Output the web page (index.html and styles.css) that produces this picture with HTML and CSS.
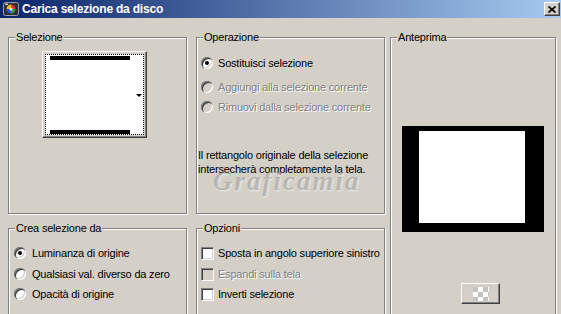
FILE: index.html
```html
<!DOCTYPE html>
<html lang="it">
<head>
<meta charset="utf-8">
<title>Carica selezione da disco</title>
<link rel="stylesheet" href="styles.css">
</head>
<body>
<div class="window">
  <div class="titlebar">
    <svg class="app-icon" width="16" height="16" viewBox="0 0 16 16">
      <rect x="0.5" y="1.5" width="15" height="13" rx="2" fill="#2e2e34" stroke="#9aa0b0"/>
      <path d="M8 8 L8 3.5 A4.5 4.5 0 0 1 12.5 8 Z" fill="#e03030"/>
      <path d="M8 8 L12.5 8 A4.5 4.5 0 0 1 8 12.5 Z" fill="#30a040"/>
      <path d="M8 8 L8 12.5 A4.5 4.5 0 0 1 3.5 8 Z" fill="#3050e0"/>
      <path d="M8 8 L3.5 8 A4.5 4.5 0 0 1 8 3.5 Z" fill="#e0c020"/>
      <circle cx="8" cy="8" r="1.5" fill="#fff"/>
      <rect x="2" y="2.5" width="3" height="1.5" fill="#d0d0d0"/>
    </svg>
    <span class="title">Carica selezione da disco</span>
    <button class="close" type="button" aria-label="Chiudi">
      <svg width="8" height="7" viewBox="0 0 8 7"><path d="M0.5 0.5 L7.5 6.5 M7.5 0.5 L0.5 6.5" stroke="#000" stroke-width="1.7"/></svg>
    </button>
  </div>

  <div class="content">
    <div class="col col-left">
      <div class="group group-top">
        <span class="legend">Selezione</span>
        <div class="picker">
          <div class="picker-face">
            <div class="thumb"><span class="bar"></span><span class="bar"></span></div>
            <span class="arrow"></span>
          </div>
        </div>
      </div>
      <div class="group group-bottom">
        <span class="legend legend-crea">Crea selezione da</span>
        <div class="opt opt-first radio-pad-left"><span class="radio checked"></span><span>Luminanza di origine</span></div>
        <div class="opt opt-second radio-pad-left"><span class="radio"></span><span>Qualsiasi val. diverso da zero</span></div>
        <div class="opt opt-third radio-pad-left"><span class="radio"></span><span>Opacità di origine</span></div>
      </div>
    </div>

    <div class="col col-mid">
      <div class="group group-top group-op">
        <span class="legend">Operazione</span>
        <div class="opt op-1 radio-pad-mid"><span class="radio checked"></span><span>Sostituisci selezione</span></div>
        <div class="opt op-2 radio-pad-mid disabled"><span class="radio"></span><span>Aggiungi alla selezione corrente</span></div>
        <div class="opt op-3 radio-pad-mid disabled"><span class="radio"></span><span>Rimuovi dalla selezione corrente</span></div>
        <p class="message">Il rettangolo originale della selezione<br>intersecherà completamente la tela.</p>
        <span class="watermark">Graficamia</span>
      </div>
      <div class="group group-bottom">
        <span class="legend">Opzioni</span>
        <div class="opt opt-first check-pad"><span class="check"></span><span>Sposta in angolo superiore sinistro</span></div>
        <div class="opt opt-second check-pad disabled"><span class="check"></span><span>Espandi sulla tela</span></div>
        <div class="opt opt-third check-pad"><span class="check"></span><span>Inverti selezione</span></div>
      </div>
    </div>

    <div class="col col-right">
      <div class="group group-preview">
        <span class="legend">Anteprima</span>
        <div class="preview"><div class="preview-inner"></div></div>
        <button class="bg-button" type="button" aria-label="Sfondo"><span class="checker"></span></button>
      </div>
    </div>
  </div>
</div>
</body>
</html>
```

FILE: styles.css
```css
html, body {
  margin: 0;
  padding: 0;
  overflow: hidden;
}

body {
  width: 561px;
  height: 314px;
  background: #d4d0c8;
  font-family: "Liberation Sans", Arial, sans-serif;
  font-size: 11px;
  letter-spacing: -0.2px;
  color: #000;
}

.window {
  display: flex;
  flex-direction: column;
}

/* ---------- title bar ---------- */
.titlebar {
  display: flex;
  align-items: center;
  height: 18px;
  padding-left: 3px;
  background: linear-gradient(to right, #0a246a, #a6caf0);
}

.app-icon {
  flex: none;
}

.title {
  margin-left: 3px;
  color: #fff;
  font-weight: bold;
  font-size: 12px;
  letter-spacing: -0.2px;
}

.close {
  margin-left: auto;
  margin-right: 1px;
  width: 16px;
  height: 14px;
  padding: 0;
  box-sizing: border-box;
  background: #d4d0c8;
  border: 1px solid;
  border-color: #fff #404040 #404040 #fff;
  box-shadow: inset -1px -1px #808080;
  display: flex;
  align-items: center;
  justify-content: center;
}

/* ---------- layout ---------- */
.content {
  display: flex;
  padding: 19px 0 0 8px;
}

.col {
  display: flex;
  flex-direction: column;
}

.col-left { width: 179px; }
.col-mid { width: 189px; margin-left: 9px; }
.col-right { width: 166px; margin-left: 5px; }

/* ---------- group boxes ---------- */
.group {
  box-sizing: border-box;
  border: 1px solid #808080;
  box-shadow: inset 1px 1px #fff, 1px 1px #fff;
  display: flex;
  flex-direction: column;
  align-items: flex-start;
}

.group-top { height: 177px; }
.group-bottom { height: 110px; margin-top: 14px; }
.group-preview { height: 300px; }
.group-op { position: relative; }

.legend {
  margin: -7px 0 0 6px;
  padding: 0 1px;
  line-height: 13px;
  background: #d4d0c8;
}

/* ---------- selection picker ---------- */
.picker {
  margin: 7px 0 0 33px;
  width: 105px;
  height: 87px;
  box-sizing: border-box;
  padding: 2px;
  background: #d4d0c8;
  border: 1px solid;
  border-color: #fff #404040 #404040 #fff;
  box-shadow: inset -1px -1px #808080, inset 1px 1px #d4d0c8;
  display: flex;
}

.picker-face {
  flex: 1;
  background: #fff;
  border: 1px dotted #000;
  display: flex;
  align-items: center;
  padding: 1px 0 0 4px;
}

.thumb {
  align-self: stretch;
  width: 80px;
  display: flex;
  flex-direction: column;
  justify-content: space-between;
}

.bar {
  display: block;
  height: 4px;
  background: #000;
}

.arrow {
  margin-left: 6px;
  width: 0;
  height: 0;
  border-left: 3px solid transparent;
  border-right: 3px solid transparent;
  border-top: 3px solid #000;
}

/* ---------- radio / checkbox rows ---------- */
.opt {
  display: flex;
  align-items: center;
  height: 14px;
  white-space: nowrap;
}

.radio-pad-left { padding-left: 5px; gap: 6px; }
.radio-pad-mid { padding-left: 4px; gap: 5px; }
.check-pad { padding-left: 4px; gap: 4px; }

.opt-first { margin-top: 11px; }
.opt-second { margin-top: 7px; }
.opt-third { margin-top: 6px; }

.op-1 { margin-top: 12px; }
.op-2 { margin-top: 10px; }
.op-3 { margin-top: 6px; }

.radio {
  position: relative;
  flex: none;
  width: 12px;
  height: 12px;
  border-radius: 50%;
  background: #fff;
  box-shadow:
    inset 1px 1px #808080,
    inset 2px 2px #404040,
    inset -1px -1px #fff,
    inset -2px -2px #d4d0c8;
}

.radio.checked::after {
  content: "";
  position: absolute;
  left: 4px;
  top: 4px;
  width: 4px;
  height: 4px;
  border-radius: 50%;
  background: #000;
}

.check {
  flex: none;
  width: 13px;
  height: 13px;
  box-sizing: border-box;
  background: #fff;
  border: 1px solid;
  border-color: #808080 #fff #fff #808080;
  box-shadow: inset 1px 1px #404040, inset -1px -1px #d4d0c8;
}

.disabled {
  color: #808080;
  text-shadow: 1px 1px #fff;
}

.disabled .radio,
.disabled .check {
  background: #d4d0c8;
}

.message {
  margin: 34px 0 0 1px;
  line-height: 14px;
  white-space: nowrap;
}

.watermark {
  position: absolute;
  left: 16px;
  top: 136px;
  line-height: 14px;
  font-family: "Liberation Serif", serif;
  font-style: italic;
  font-weight: bold;
  font-size: 27px;
  letter-spacing: 2px;
  color: rgba(70, 70, 70, 0.28);
  text-shadow: 1px 1px 2px rgba(255, 255, 255, 0.6);
  pointer-events: none;
}

/* ---------- preview ---------- */
.preview {
  margin: 82px 0 0 11px;
  width: 142px;
  height: 106px;
  box-sizing: border-box;
  padding: 5px 19px 9px 17px;
  background: #000;
}

.preview-inner {
  height: 100%;
  background: #fff;
}

.bg-button {
  margin: 51px 0 0 70px;
  width: 39px;
  height: 21px;
  padding: 0;
  box-sizing: border-box;
  background: #d4d0c8;
  border: 1px solid;
  border-color: #fff #404040 #404040 #fff;
  box-shadow: inset -1px -1px #808080;
  display: flex;
  align-items: center;
  justify-content: center;
}

.checker {
  width: 16px;
  height: 14px;
  background: repeating-conic-gradient(#fff 0 25%, #c4c2bc 0 50%) 0 0 / 10px 10px;
}
```
